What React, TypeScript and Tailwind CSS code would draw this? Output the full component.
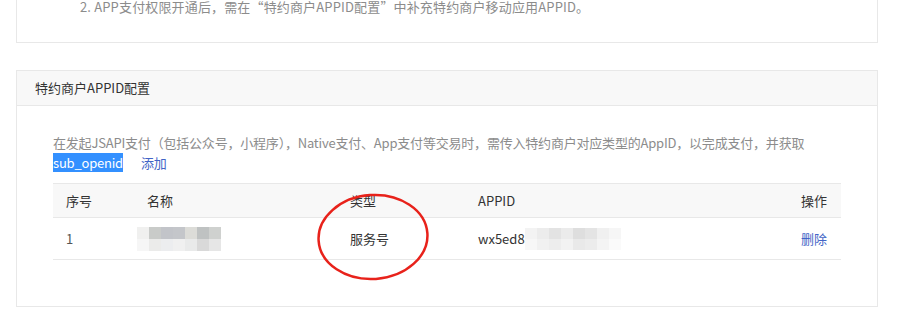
import React from 'react';

const font = { fontFamily: '"Noto Sans CJK SC", "Liberation Sans", sans-serif' };

const nameBlocks = [
  ['#f0f0ef', '#c9cbc9', '#c2c4c9', '#c4c6ca', '#dcdcd8', '#bfc2c2', '#cfd1cf'],
  ['#f6f6f6', '#ebebea', '#ecedef', '#f0f0f0', '#e9eaea', '#d9d9d9', '#e6e6e6'],
];

const appidBlocks = [
  ['#f3f3f3', '#ececec', '#e3e3e3', '#ebebeb', '#dedede', '#e4e4e4', '#f0f0f0', '#f6f6f6'],
  ['#f7f7f7', '#f1f1f1', '#ededed', '#f2f2f2', '#e9e9e9', '#ececec', '#f4f4f4', '#fafafa'],
];

function Pixelated({ rows, cell }: { rows: string[][]; cell: string }) {
  return (
    <div className="flex flex-col">
      {rows.map((row, i) => (
        <div key={i} className="flex">
          {row.map((c, j) => (
            <div key={j} className={cell} style={{ backgroundColor: c }} />
          ))}
        </div>
      ))}
    </div>
  );
}

export default function App() {
  return (
    <div className="relative h-[334px] w-[918px] overflow-hidden bg-white text-[13px]" style={font}>
      <div className="ml-[16px] w-[862px]">
        {/* top card, scrolled partly out of view */}
        <div className="-mt-[23px] border border-[#e8e8e8] pb-[25px] pl-[63px] pt-[19px]">
          <p className="leading-[20px] tracking-[0.15px] text-[#8c8c8c]">
            2. APP支付权限开通后，需在“特约商户APPID配置”中补充特约商户移动应用APPID。
          </p>
        </div>

        <div className="mt-[27px] border border-[#e8e8e8]">
          <div className="flex h-[35px] items-center border-b border-[#e8e8e8] bg-[#f8f8f8] pl-[18px] text-[#333]">
            特约商户APPID配置
          </div>
          <div className="px-[36px] pb-[46px] pt-[27px]">
            <p className="leading-[20px] tracking-[-0.2px] text-[#8c8c8c]">
              在发起JSAPI支付（包括公众号，小程序），Native支付、App支付等交易时，需传入特约商户对应类型的AppID，以完成支付，并获取
              <span className="bg-[#3390ff] text-white">sub_openid</span>
              <a className="ml-[18px] text-[#4264c6]">添加</a>
            </p>
            <div className="mt-[10px] border-t border-[#e8e8e8]">
              <div className="flex h-[34px] items-center border-b border-[#e8e8e8] bg-[#f8f8f8] text-[#333]">
                <div className="w-[81px] pl-[13px]">序号</div>
                <div className="w-[203px] pl-[13px]">名称</div>
                <div className="w-[128px] pl-[13px]">类型</div>
                <div className="flex-1 pl-[13px]">APPID</div>
                <div className="pr-[14px]">操作</div>
              </div>
              <div className="flex h-[42px] items-center border-b border-[#e8e8e8] text-[#333]">
                <div className="w-[81px] pl-[13px] text-[#555]">1</div>
                <div className="w-[203px] pl-[3px]">
                  <Pixelated rows={nameBlocks} cell="h-[12px] w-[12px]" />
                </div>
                <div className="w-[128px] pl-[13px]">服务号</div>
                <div className="flex flex-1 items-center pl-[13px]">
                  <span>wx5ed8</span>
                  <Pixelated rows={appidBlocks} cell="h-[11px] w-[12px]" />
                </div>
                <div className="pr-[14px] text-[#4264c6]">删除</div>
              </div>
            </div>
          </div>
        </div>
      </div>

      <svg className="absolute left-[314px] top-[191px]" width="120" height="92" viewBox="0 0 120 92">
        <ellipse
          cx="59"
          cy="46"
          rx="54.5"
          ry="42"
          fill="none"
          stroke="#e8221b"
          strokeWidth="2.5"
          transform="rotate(-4 59 46)"
        />
      </svg>
    </div>
  );
}
